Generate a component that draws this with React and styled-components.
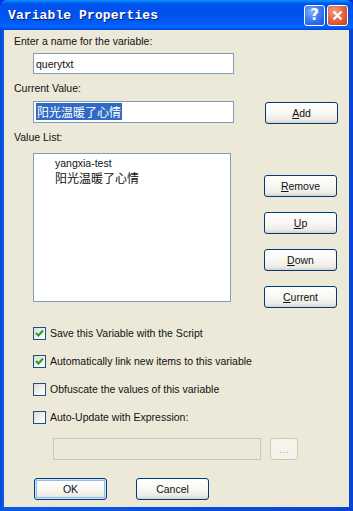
import React from "react";
import styled, { createGlobalStyle } from "styled-components";

const GlobalStyle = createGlobalStyle`
  html, body {
    margin: 0;
    padding: 0;
    background: #ece9d8;
  }
  body {
    font-family: "Liberation Sans", Arial, "Noto Sans CJK SC", sans-serif;
    font-size: 10.5px;
    color: #111;
  }
`;

const Window = styled.div`
  width: 353px;
  height: 511px;
  display: flex;
  flex-direction: column;
  background: #0831d9;
  overflow: hidden;
`;

const TitleBar = styled.div`
  height: 30px;
  flex: none;
  display: flex;
  align-items: center;
  padding: 0 5px 0 8px;
  border-radius: 7px 7px 0 0;
  background: linear-gradient(
    to bottom,
    #0997ff 0%,
    #0053ee 12%,
    #0050ee 40%,
    #0058f0 70%,
    #0066ff 90%,
    #0044dd 100%
  );
`;

const Title = styled.div`
  flex: 1;
  color: #fff;
  font-family: "Liberation Mono", "Courier New", monospace;
  font-weight: bold;
  font-size: 13px;
  letter-spacing: 0.1px;
  text-shadow: 1px 1px 0 #0a1e7a;
`;

const CaptionButton = styled.div`
  width: 21px;
  height: 21px;
  margin-left: 2px;
  box-sizing: border-box;
  border: 1px solid #fff;
  border-radius: 3px;
  display: flex;
  align-items: center;
  justify-content: center;
  color: #fff;
  font-family: "DejaVu Sans", sans-serif;
  font-weight: bold;
  font-size: 15px;
  background: ${(p) =>
    p.$close
      ? "radial-gradient(circle at 35% 30%, #f3a08a 0%, #e56a45 45%, #c9391c 100%)"
      : "radial-gradient(circle at 35% 30%, #7fb0ff 0%, #3a78f0 50%, #1a55d8 100%)"};
`;

const Frame = styled.div`
  flex: 1;
  display: flex;
  padding: 0 4px 4px 4px;
  background: linear-gradient(to right, #0840d0, #0a5ae8 2px, #0843d8);
`;

const Body = styled.div`
  flex: 1;
  background: #ece9d8;
  padding: 5px 0 0 10px;
  display: flex;
  flex-direction: column;
`;

const Label = styled.div`
  height: 13px;
  line-height: 13px;
  margin-top: ${(p) => p.$mt || 0}px;
`;

const Row = styled.div`
  display: flex;
  align-items: ${(p) => p.$align || "center"};
  margin-top: ${(p) => p.$mt || 0}px;
  padding-left: ${(p) => p.$pl || 0}px;
`;

const TextBox = styled.div`
  width: ${(p) => p.$w || 200}px;
  height: ${(p) => p.$h || 21}px;
  box-sizing: border-box;
  border: 1px solid #7f9db9;
  background: ${(p) => (p.$disabled ? "#ece9d8" : "#fff")};
  border-color: ${(p) => (p.$disabled ? "#c9c7ba" : "#7f9db9")};
  display: flex;
  align-items: center;
  padding-left: 2px;
`;

const Selected = styled.span`
  background: #316ac5;
  color: #fff;
  font-family: "Noto Sans CJK SC", sans-serif;
  font-size: 12px;
  line-height: 17px;
  padding: 0 1px;
`;

const Button = styled.div`
  width: ${(p) => p.$w || 73}px;
  height: ${(p) => p.$h || 22}px;
  box-sizing: border-box;
  border: 1px solid ${(p) => (p.$disabled ? "#c9c7ba" : "#003c74")};
  border-radius: 3px;
  display: flex;
  align-items: center;
  justify-content: center;
  color: ${(p) => (p.$disabled ? "#aca899" : "#111")};
  background: ${(p) =>
    p.$disabled
      ? "#f5f4ea"
      : "linear-gradient(to bottom, #ffffff 0%, #f8f7f2 50%, #ecebe6 85%, #d6d0c5 100%)"};
  box-shadow: ${(p) =>
    p.$default ? "inset 0 0 0 1px #cee7ff, inset 0 0 0 2px #98b8ea" : "none"};
  margin-top: ${(p) => p.$mt || 0}px;
  margin-left: ${(p) => p.$ml || 0}px;
  u {
    text-decoration: underline;
  }
`;

const ListBox = styled.div`
  width: 198px;
  height: 149px;
  box-sizing: border-box;
  border: 1px solid #7f9db9;
  background: #fff;
  padding: 3px 0 0 21px;
  display: flex;
  flex-direction: column;
`;

const ListItem = styled.div`
  line-height: ${(p) => (p.$cjk ? 15 : 13)}px;
  font-size: ${(p) => (p.$cjk ? 12 : 10.5)}px;
  font-family: ${(p) =>
    p.$cjk ? '"Noto Sans CJK SC", sans-serif' : '"Liberation Sans", Arial, sans-serif'};
`;

const ButtonColumn = styled.div`
  display: flex;
  flex-direction: column;
  margin-left: 33px;
  margin-bottom: -6px;
  padding-top: 22px;
  gap: 15px;
`;

const CheckRow = styled.div`
  display: flex;
  align-items: center;
  height: 14px;
  margin-top: ${(p) => p.$mt || 0}px;
  padding-left: 19px;
`;

const Box = styled.div`
  width: 13px;
  height: 13px;
  box-sizing: border-box;
  border: 1px solid #1c5180;
  background: linear-gradient(135deg, #dcdcd7 0%, #f3f3ef 60%, #ffffff 100%);
  margin-right: 4px;
  display: flex;
  align-items: center;
  justify-content: center;
`;

const Check = () => (
  <svg width="9" height="9" viewBox="0 0 9 9">
    <path d="M1 4 L3.5 6.5 L8 1.5" stroke="#21a121" strokeWidth="2" fill="none" />
  </svg>
);

const Checkbox = ({ checked, children, mt }) => (
  <CheckRow $mt={mt}>
    <Box>{checked && <Check />}</Box>
    <span>{children}</span>
  </CheckRow>
);

export default function App() {
  return (
    <>
      <GlobalStyle />
      <Window>
        <TitleBar>
          <Title>Variable Properties</Title>
          <CaptionButton>?</CaptionButton>
          <CaptionButton $close>
            <svg width="11" height="11" viewBox="0 0 11 11">
              <path d="M1.5 1.5 L9.5 9.5 M9.5 1.5 L1.5 9.5" stroke="#fff" strokeWidth="2.2" />
            </svg>
          </CaptionButton>
        </TitleBar>
        <Frame>
          <Body>
            <Label>Enter a name for the variable:</Label>
            <Row $mt={5} $pl={19}>
              <TextBox $w={201}>querytxt</TextBox>
            </Row>
            <Label $mt={8}>Current Value:</Label>
            <Row $mt={4} $pl={19}>
              <TextBox $w={201} $h={22}>
                <Selected>阳光温暖了心情</Selected>
              </TextBox>
              <Button $ml={31} $mt={3}>
                <span>
                  <u>A</u>dd
                </span>
              </Button>
            </Row>
            <Label $mt={7}>Value List:</Label>
            <Row $mt={9} $pl={19} $align="flex-start">
              <ListBox>
                <ListItem>yangxia-test</ListItem>
                <ListItem $cjk>阳光温暖了心情</ListItem>
              </ListBox>
              <ButtonColumn>
                <Button>
                  <span>
                    <u>R</u>emove
                  </span>
                </Button>
                <Button>
                  <span>
                    <u>U</u>p
                  </span>
                </Button>
                <Button>
                  <span>
                    <u>D</u>own
                  </span>
                </Button>
                <Button>
                  <span>
                    <u>C</u>urrent
                  </span>
                </Button>
              </ButtonColumn>
            </Row>
            <Checkbox checked mt={24}>Save this Variable with the Script</Checkbox>
            <Checkbox checked mt={14}>Automatically link new items to this variable</Checkbox>
            <Checkbox mt={14}>Obfuscate the values of this variable</Checkbox>
            <Checkbox mt={14}>Auto-Update with Expression:</Checkbox>
            <Row $mt={14} $pl={39}>
              <TextBox $w={208} $h={22} $disabled />
              <Button $w={28} $ml={9} $disabled>...</Button>
            </Row>
            <Row $mt={18} $pl={20}>
              <Button $default>OK</Button>
              <Button $ml={29}>Cancel</Button>
            </Row>
          </Body>
        </Frame>
      </Window>
    </>
  );
}
